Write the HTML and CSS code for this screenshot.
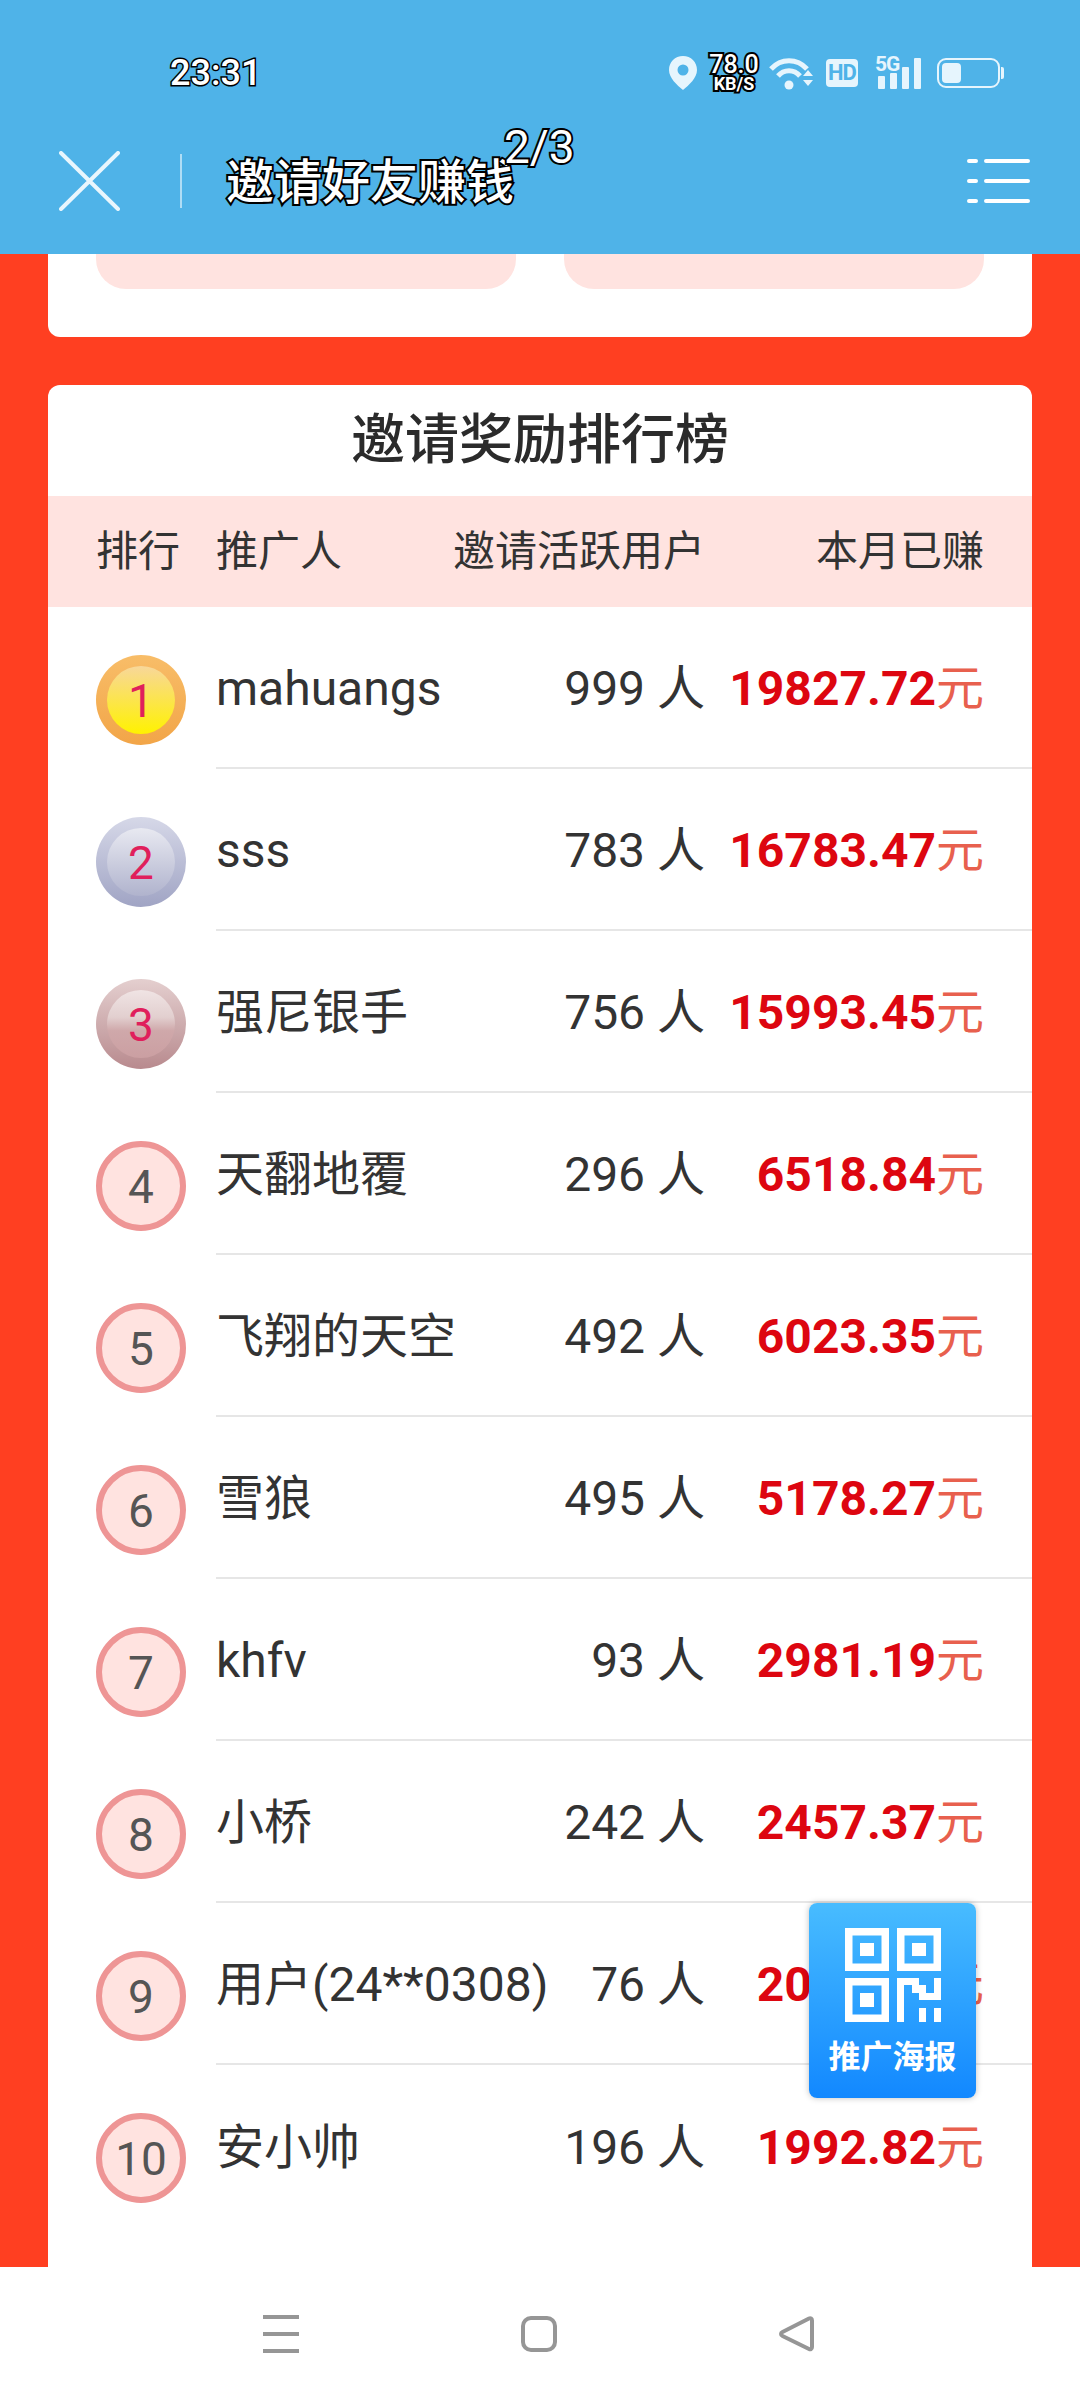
FILE: index.html
```html
<!DOCTYPE html>
<html lang="zh-CN">
<head>
    <meta charset="UTF-8">
    <meta name="viewport" content="width=device-width, initial-scale=1.0">
    <title>邀请好友赚钱</title>
    <link rel="stylesheet" href="styles.css">
</head>
<body>
    <header class="header">
        <div class="status-bar">
            <span class="outlined status-time">23:31</span>
            <div class="status-icons">
                <svg class="icon-pin" viewBox="0 0 28 34"><path fill-rule="evenodd" d="M14 0C6 0 0 6 0 14c0 8 8 15 14 20 6-5 14-12 14-20C28 6 22 0 14 0zm0 8.500a5.500 5.500 0 1 1 0 11 5.500 5.500 0 0 1 0-11z"/></svg>
                <div class="outlined status-speed">
                    <span class="speed-value">78.0</span>
                    <span class="speed-unit">KB/S</span>
                </div>
                <svg class="icon-wifi" viewBox="0 0 44 33">
                    <path class="arc" d="M2 12C12 1 28 1 38 12"/>
                    <path class="arc" d="M9 19C15 12 25 12 31 19"/>
                    <circle cx="20" cy="28" r="4.500"/>
                    <path d="M39 13l5 6H34zM34 23h10l-5 6z"/>
                </svg>
                <div class="status-hd">HD</div>
                <div class="status-signal">
                    <span class="signal-label">5G</span>
                    <svg class="icon-bars" viewBox="0 0 43 31">
                        <rect x="0" y="18" width="7" height="13" rx="1"/>
                        <rect x="12" y="15" width="7" height="16" rx="1"/>
                        <rect x="24" y="9" width="7" height="22" rx="1"/>
                        <rect x="36" y="0" width="7" height="31" rx="1"/>
                    </svg>
                </div>
                <div class="status-battery">
                    <div class="battery-body"><div class="battery-level"></div></div>
                    <div class="battery-cap"></div>
                </div>
            </div>
        </div>
        <div class="toolbar">
            <svg class="icon-close" viewBox="0 0 61 60"><path d="M2 2l57 56M59 2L2 58"/></svg>
            <div class="toolbar-divider"></div>
            <span class="outlined toolbar-title">邀请好友赚钱</span>
            <span class="outlined toolbar-count">2/3</span>
            <svg class="icon-menu" viewBox="0 0 63 44">
                <path d="M2 2h7M19 2h42M2 22h7M19 22h42M2 42h7M19 42h42"/>
            </svg>
        </div>
    </header>

    <main class="content">
        <section class="card card-stub">
            <div class="stub-button"></div>
            <div class="stub-button"></div>
        </section>

        <section class="card card-rank">
            <h2 class="rank-title">邀请奖励排行榜</h2>
            <div class="rank-head">
                <span class="head-rank">排行</span>
                <span class="head-name">推广人</span>
                <span class="head-count">邀请活跃用户</span>
                <span class="head-amount">本月已赚</span>
            </div>
            <div class="rank-row">
                <div class="rank-cell"><div class="medal medal-gold"><span class="medal-inner">1</span></div></div>
                <div class="row-body">
                    <span class="row-name">mahuangs</span>
                    <span class="row-count">999 人</span>
                    <span class="row-amount"><b>19827.72</b>元</span>
                </div>
            </div>
            <div class="rank-row">
                <div class="rank-cell"><div class="medal medal-silver"><span class="medal-inner">2</span></div></div>
                <div class="row-body">
                    <span class="row-name">sss</span>
                    <span class="row-count">783 人</span>
                    <span class="row-amount"><b>16783.47</b>元</span>
                </div>
            </div>
            <div class="rank-row">
                <div class="rank-cell"><div class="medal medal-bronze"><span class="medal-inner">3</span></div></div>
                <div class="row-body">
                    <span class="row-name">强尼银手</span>
                    <span class="row-count">756 人</span>
                    <span class="row-amount"><b>15993.45</b>元</span>
                </div>
            </div>
            <div class="rank-row">
                <div class="rank-cell"><div class="medal">4</div></div>
                <div class="row-body">
                    <span class="row-name">天翻地覆</span>
                    <span class="row-count">296 人</span>
                    <span class="row-amount"><b>6518.84</b>元</span>
                </div>
            </div>
            <div class="rank-row">
                <div class="rank-cell"><div class="medal">5</div></div>
                <div class="row-body">
                    <span class="row-name">飞翔的天空</span>
                    <span class="row-count">492 人</span>
                    <span class="row-amount"><b>6023.35</b>元</span>
                </div>
            </div>
            <div class="rank-row">
                <div class="rank-cell"><div class="medal">6</div></div>
                <div class="row-body">
                    <span class="row-name">雪狼</span>
                    <span class="row-count">495 人</span>
                    <span class="row-amount"><b>5178.27</b>元</span>
                </div>
            </div>
            <div class="rank-row">
                <div class="rank-cell"><div class="medal">7</div></div>
                <div class="row-body">
                    <span class="row-name">khfv</span>
                    <span class="row-count">93 人</span>
                    <span class="row-amount"><b>2981.19</b>元</span>
                </div>
            </div>
            <div class="rank-row">
                <div class="rank-cell"><div class="medal">8</div></div>
                <div class="row-body">
                    <span class="row-name">小桥</span>
                    <span class="row-count">242 人</span>
                    <span class="row-amount"><b>2457.37</b>元</span>
                </div>
            </div>
            <div class="rank-row">
                <div class="rank-cell"><div class="medal">9</div></div>
                <div class="row-body">
                    <span class="row-name">用户(24**0308)</span>
                    <span class="row-count">76 人</span>
                    <span class="row-amount"><b>2018.26</b>元</span>
                </div>
            </div>
            <div class="rank-row">
                <div class="rank-cell"><div class="medal">10</div></div>
                <div class="row-body">
                    <span class="row-name">安小帅</span>
                    <span class="row-count">196 人</span>
                    <span class="row-amount"><b>1992.82</b>元</span>
                </div>
            </div>
        </section>
    </main>

    <div class="poster-button">
        <svg class="icon-qr" viewBox="0 0 96 94">
            <path fill-rule="evenodd" d="M0 0h44v43H0zM7.500 7.500v28h29v-28zM15 15h14v13H15z"/>
            <path fill-rule="evenodd" d="M52 0h44v43H52zM59.500 7.500v28h29v-28zM67 15h14v13H67z"/>
            <path fill-rule="evenodd" d="M0 50h44v44H0zM7.500 57.500v29h29v-29zM15 65h14v14H15z"/>
            <path d="M52 50h22v7h7v8h8V50h7v22H74v-7H67v-8h-8v37h-7zM74 80h7v14h-7zM89 80h7v14h-7z"/>
        </svg>
        <span class="poster-label">推广海报</span>
    </div>

    <nav class="nav-bar">
        <svg class="nav-menu" viewBox="0 0 36 38"><path d="M0 2h36M0 19h36M0 36h36"/></svg>
        <svg class="nav-home" viewBox="0 0 36 36"><rect x="2" y="2" width="32" height="32" rx="8"/></svg>
        <svg class="nav-back" viewBox="0 0 35 36"><path d="M30 2.500c1.500-.8 3 0 3 2v26.500c0 2-1.500 2.800-3 2L3.500 20c-2-1-2-3 0-4z"/></svg>
    </nav>
</body>
</html>
```

FILE: styles.css
```css
* {
    box-sizing: border-box;
}
body {
    margin: 0;
    width: 1080px;
    height: 2400px;
    display: flex;
    flex-direction: column;
    position: relative;
    overflow: hidden;
    font-family: Roboto, "Noto Sans CJK SC", sans-serif;
    background: #fff;
    color: #333;
}

/* header */
.header {
    height: 254px;
    flex: none;
    background: #4fb3e8;
}
.outlined {
    color: #fff;
    -webkit-text-stroke: 4px #000;
    paint-order: stroke fill;
}
.status-bar {
    height: 96px;
    padding: 50px 76px 0 170px;
    display: flex;
    justify-content: space-between;
    align-items: center;
}
.status-time {
    font-size: 36px;
    font-weight: 500;
    line-height: 46px;
    -webkit-text-stroke-width: 3px;
}
.status-icons {
    display: flex;
    align-items: center;
    fill: #e6f5fd;
}
.icon-pin {
    width: 28px;
    height: 34px;
    margin-right: 11px;
}
.status-speed {
    width: 52px;
    display: flex;
    flex-direction: column;
    align-items: center;
    -webkit-text-stroke-width: 4px;
    margin-right: 9px;
}
.speed-value {
    font-size: 25px;
    font-weight: 500;
    line-height: 21px;
}
.speed-unit {
    font-size: 18px;
    font-weight: 700;
    line-height: 17px;
}
.icon-wifi {
    width: 44px;
    height: 33px;
    margin-right: 13px;
}
.icon-wifi .arc {
    fill: none;
    stroke: #e6f5fd;
    stroke-width: 5px;
}
.status-hd {
    width: 32px;
    height: 28px;
    margin-right: 17px;
    border-radius: 4px;
    background: #e6f5fd;
    color: #4fb3e8;
    font-size: 22px;
    font-weight: 700;
    line-height: 28px;
    letter-spacing: -1px;
    text-align: center;
}
.status-signal {
    width: 46px;
    height: 32px;
    margin-right: 16px;
    display: flex;
    align-items: flex-end;
    position: relative;
}
.signal-label {
    position: absolute;
    left: 0;
    top: -3px;
    color: #e6f5fd;
    font-size: 21px;
    font-weight: 700;
    line-height: 20px;
    letter-spacing: -1px;
}
.icon-bars {
    width: 43px;
    height: 31px;
    margin-left: 3px;
}
.status-battery {
    display: flex;
    align-items: center;
}
.battery-body {
    width: 63px;
    height: 30px;
    padding: 3px;
    border: 2px solid #e6f5fd;
    border-radius: 9px;
}
.battery-level {
    width: 19px;
    height: 20px;
    border-radius: 4px;
    background: #e6f5fd;
}
.battery-cap {
    width: 3px;
    height: 12px;
    margin-left: 1px;
    border-radius: 0 2px 2px 0;
    background: #e6f5fd;
}

.toolbar {
    height: 158px;
    padding: 0 50px 0 59px;
    display: flex;
    align-items: center;
}
.icon-close {
    width: 61px;
    height: 60px;
    margin-top: 12px;
    fill: none;
    stroke: #e9f6fd;
    stroke-width: 4px;
    stroke-linecap: round;
}
.toolbar-divider {
    width: 2px;
    height: 54px;
    margin: 12px 44px 0 60px;
    background: rgba(255, 255, 255, 0.55);
}
.toolbar-title {
    font-size: 48px;
    font-weight: 500;
    line-height: 60px;
    margin-top: 16px;
}
.toolbar-count {
    font-size: 46px;
    line-height: 54px;
    margin: 0 0 0 -10px;
    align-self: flex-start;
    padding-top: 24px;
}
.icon-menu {
    width: 63px;
    height: 44px;
    margin-left: auto;
    margin-top: 12px;
    fill: none;
    stroke: #fff;
    stroke-width: 4px;
    stroke-linecap: round;
}

/* page content */
.content {
    flex: 1;
    min-height: 0;
    padding: 0 48px;
    display: flex;
    flex-direction: column;
    gap: 48px;
    overflow: hidden;
    background: #ff3f21;
}
.card {
    background: #fff;
    border-radius: 0 0 12px 12px;
}
.card-stub {
    height: 83px;
    flex: none;
    padding: 0 48px;
    display: flex;
    gap: 48px;
}
.stub-button {
    flex: 1;
    height: 35px;
    border-radius: 0 0 30px 30px;
    background: #ffe3e0;
}
.card-rank {
    flex: 1;
    border-radius: 12px 12px 0 0;
}
.rank-title {
    margin: 0;
    height: 111px;
    font-size: 54px;
    font-weight: 500;
    line-height: 112px;
    text-align: center;
    color: #2b2b2b;
}
.rank-head {
    height: 111px;
    padding: 0 48px;
    display: flex;
    align-items: center;
    background: #ffe3e0;
    font-size: 42px;
    line-height: 56px;
}
.head-rank {
    width: 120px;
}
.head-name {
    flex: 1;
}
.head-count {
    width: 260px;
    margin-right: -2px;
    text-align: right;
}
.head-amount {
    width: 281px;
    text-align: right;
}

.rank-row {
    height: 162px;
    display: flex;
}
.rank-cell {
    width: 168px;
    flex: none;
    padding: 48px 0 0 48px;
}
.medal {
    width: 90px;
    height: 90px;
    padding-top: 2px;
    border: 6px solid #ee9595;
    border-radius: 50%;
    background: #ffe3e0;
    display: flex;
    justify-content: center;
    align-items: center;
    color: #555;
    font-size: 46px;
}
.medal-gold, .medal-silver, .medal-bronze {
    border: 0;
    padding: 11px;
    color: #e01f5c;
}
.medal-inner {
    width: 100%;
    height: 100%;
    padding-top: 2px;
    border-radius: 50%;
    display: flex;
    justify-content: center;
    align-items: center;
}
.medal-gold {
    background: linear-gradient(#f8bd68, #f2a548);
}
.medal-gold .medal-inner {
    background: linear-gradient(#f8d79a, #fff200);
}
.medal-silver {
    background: linear-gradient(#d6d8e8, #a0a4c4);
}
.medal-silver .medal-inner {
    background: linear-gradient(#e8e9f1, #b0b3cd);
}
.medal-bronze {
    background: linear-gradient(#e4cfcf, #b88a8e);
}
.medal-bronze .medal-inner {
    background: linear-gradient(#f0e4e4 0%, #e2cfcf 40%, #cfa8aa 60%, #cb9fa2 100%);
}
.row-body {
    flex: 1;
    padding-right: 48px;
    padding-top: 3px;
    display: flex;
    align-items: center;
    border-bottom: 2px solid #e6e6e6;
    font-size: 48px;
    line-height: 60px;
}
.rank-row:last-child .row-body {
    border-bottom: 0;
}
.row-name {
    flex: 1;
    white-space: nowrap;
    color: #333;
}
.row-count {
    white-space: nowrap;
    color: #333;
}
.row-amount {
    width: 279px;
    flex: none;
    text-align: right;
    color: #e8604e;
    white-space: nowrap;
}
.row-amount b {
    color: #dd0610;
    font-weight: 700;
}

/* floating poster button */
.poster-button {
    position: absolute;
    left: 809px;
    top: 1903px;
    width: 167px;
    height: 195px;
    padding-top: 25px;
    display: flex;
    flex-direction: column;
    align-items: center;
    border-radius: 8px;
    background: linear-gradient(#48bcff, #1288ff);
    box-shadow: 0 0 6px rgba(0, 0, 0, 0.25);
}
.icon-qr {
    width: 96px;
    height: 94px;
    fill: #fff;
}
.poster-label {
    margin-top: 16px;
    color: #fff;
    font-size: 32px;
    font-weight: 700;
    line-height: 38px;
}

/* system nav bar */
.nav-bar {
    height: 133px;
    flex: none;
    padding: 0 266px 0 263px;
    display: flex;
    justify-content: space-between;
    align-items: center;
    background: #fff;
    fill: none;
    stroke: #969696;
}
.nav-menu {
    width: 36px;
    height: 38px;
    stroke-width: 4px;
}
.nav-home {
    width: 36px;
    height: 36px;
    stroke-width: 4px;
}
.nav-back {
    width: 35px;
    height: 36px;
    stroke-width: 4px;
}
```
